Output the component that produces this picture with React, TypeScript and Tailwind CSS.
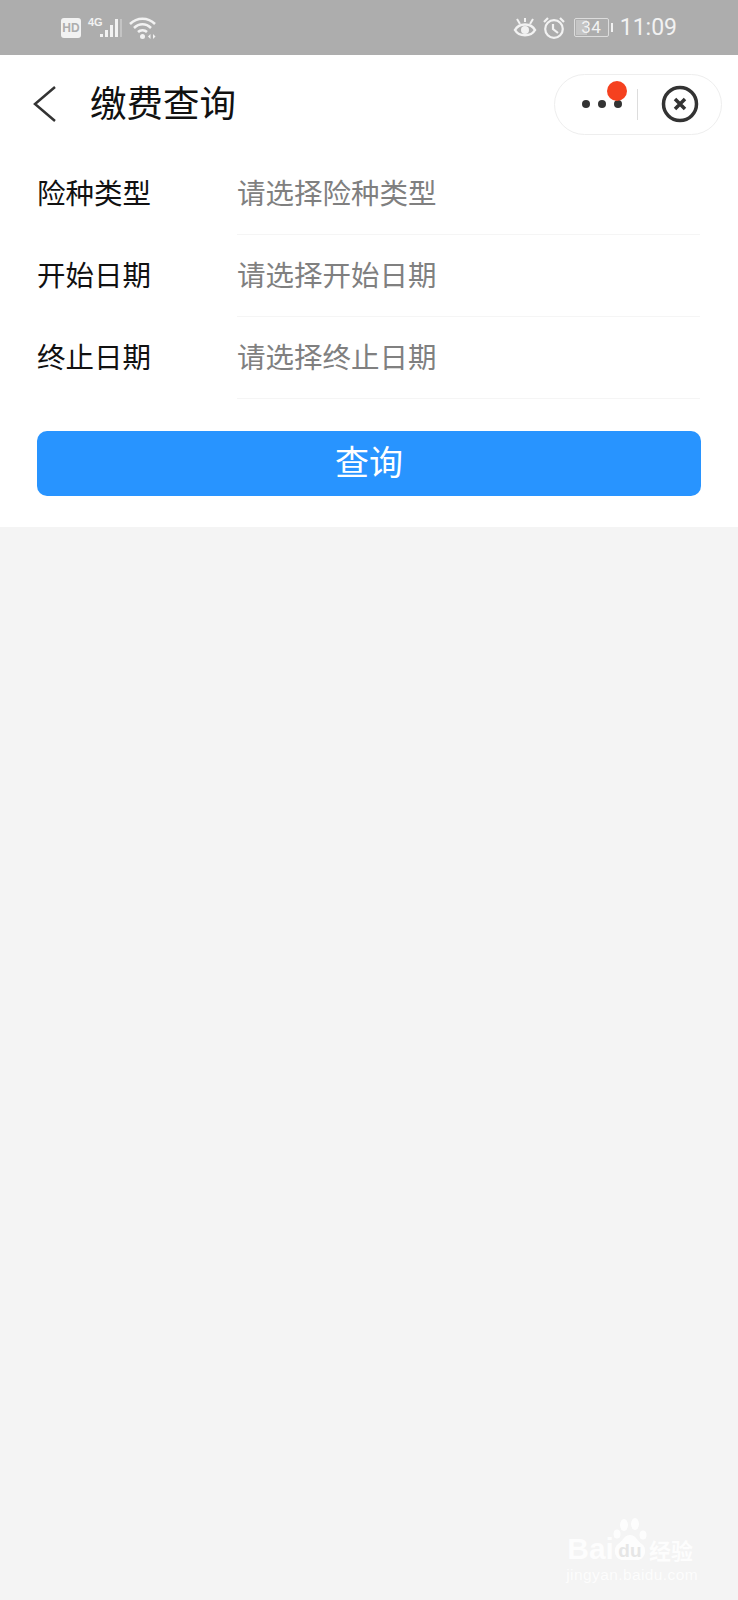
import React from "react";

const fields = [
  { label: "险种类型", placeholder: "请选择险种类型" },
  { label: "开始日期", placeholder: "请选择开始日期" },
  { label: "终止日期", placeholder: "请选择终止日期" },
];

function StatusBar() {
  return (
    <div className="flex h-[55px] items-center justify-between bg-[#adadad] pl-[61px] pr-[61px] text-[#f2f2f2]">
      <div className="flex items-center">
        <div className="flex h-[20px] w-[20px] items-center justify-center rounded-[3px] bg-[#f2f2f2] font-['Liberation_Sans',sans-serif] text-[12px] font-bold leading-none text-[#adadad]">
          HD
        </div>
        <svg width="36" height="24" viewBox="0 0 36 24" className="ml-[6px]" fill="#f2f2f2">
          <text x="1" y="10" fontSize="11" fontWeight="700" fontFamily="Liberation Sans Narrow, Liberation Sans">4G</text>
          <rect x="13" y="18" width="3" height="3" />
          <rect x="18" y="14" width="3" height="7" />
          <rect x="23" y="9" width="3" height="12" />
          <rect x="28" y="3" width="3" height="18" />
          <rect x="33" y="3" width="2" height="18" opacity="0.35" />
        </svg>
        <svg width="28" height="24" viewBox="0 0 28 24" className="ml-[6px]" fill="none" stroke="#f2f2f2" strokeWidth="2.500">
          <path d="M1 8 C8 1 19 1 26 8" />
          <path d="M5 12 C10 7 17 7 22 12" />
          <path d="M9 16 C11.500 13.500 15.500 13.500 18 16" />
          <circle cx="13.500" cy="20.500" r="2.500" fill="#f2f2f2" stroke="none" />
          <path d="M21.500 18 L19 20.500 L21.500 23 Z" fill="#f2f2f2" stroke="none" />
          <path d="M24 18 L26.500 20.500 L24 23 Z" fill="#f2f2f2" stroke="none" />
        </svg>
      </div>
      <div className="flex items-center">
        <svg width="24" height="24" viewBox="0 0 24 24" fill="none" stroke="#f2f2f2">
          <path d="M2 14 C6 6.500 18 6.500 22 14 C18 21 6 21 2 14 Z" strokeWidth="2.500" />
          <circle cx="12" cy="14" r="4" fill="#f2f2f2" stroke="none" />
          <path d="M4 3 L7 8 M20 3 L17 8 M12 2 V6" strokeWidth="2" />
        </svg>
        <svg width="24" height="24" viewBox="0 0 24 24" className="ml-[5px]" fill="none" stroke="#f2f2f2" strokeWidth="2.200">
          <circle cx="12" cy="13" r="8.800" />
          <path d="M11 8 V13 L16 17" />
          <path d="M2 6 L6 2 M22 6 L18 2" />
        </svg>
        <div className="relative ml-[8px] flex h-[19px] w-[35px] items-center justify-center rounded-[2px] border border-[#dcdcdc] text-[17px] leading-none tracking-[0.5px]">
          <div className="absolute inset-y-[1px] left-[1px] w-[11px] bg-[#c4c4c4]" />
          <span className="relative font-['Roboto',sans-serif]">34</span>
        </div>
        <div className="ml-[2px] h-[9px] w-[2px] bg-[#f2f2f2]" />
        <span className="ml-[7px] font-['Roboto',sans-serif] text-[23px] font-normal leading-none">
          11:09
        </span>
      </div>
    </div>
  );
}

function NavBar() {
  return (
    <div className="flex h-[96px] items-center justify-between pl-[33px] pr-[16px]">
      <div className="flex items-center">
        <svg width="24" height="36" viewBox="0 0 24 36" fill="none" stroke="#333333" strokeWidth="2.500" className="mt-[2px]">
          <path d="M22 1 L2 18 L22 35" />
        </svg>
        <h1 className="ml-[33px] mt-[-2px] text-[36.500px] font-normal leading-none text-[#111111]">缴费查询</h1>
      </div>
      <div className="mt-[2px] flex h-[61px] w-[168px] items-center rounded-full border border-[#eeeeee] bg-white pl-[27px]">
        <div className="relative flex items-center gap-[8px]">
          <span className="h-[8px] w-[8px] rounded-full bg-[#333333]" />
          <span className="h-[8px] w-[8px] rounded-full bg-[#333333]" />
          <span className="h-[8px] w-[8px] rounded-full bg-[#333333]" />
          <span className="absolute left-[25px] top-[-19px] h-[20px] w-[20px] rounded-full bg-[#f5411f]" />
        </div>
        <div className="ml-[15px] h-[31px] w-px bg-[#dddddd]" />
        <svg width="38" height="38" viewBox="0 0 38 38" fill="none" stroke="#333333" className="ml-[23px]">
          <circle cx="19" cy="19" r="16.500" strokeWidth="3.500" />
          <path d="M14 14 L24 24 M24 14 L14 24" strokeWidth="3.500" />
        </svg>
      </div>
    </div>
  );
}

function Watermark() {
  return (
    <div className="absolute bottom-[17px] right-[40px] flex flex-col text-white opacity-85">
      <div className="ml-[5px] flex items-end font-['Liberation_Sans',sans-serif] leading-none">
        <span className="text-[30px] font-bold leading-[24px]">Bai</span>
        <div className="relative flex h-[26px] w-[32px] items-center justify-center">
          <svg width="36" height="44" viewBox="0 0 36 44" fill="#ffffff" className="absolute bottom-0 left-[-2px]">
            <ellipse cx="5" cy="17" rx="3.500" ry="4.500" />
            <ellipse cx="12" cy="8" rx="4" ry="6" />
            <ellipse cx="23" cy="7" rx="4" ry="6" />
            <ellipse cx="31" cy="18" rx="3.500" ry="4.500" />
            <path d="M18 18 C24 18 25 24 30 27 C36 32 33 43 25 43 H11 C3 43 0 32 6 27 C11 24 12 18 18 18 Z" />
          </svg>
          <span className="relative mt-[4px] text-[19px] font-bold leading-none text-[#e4e4e4]">du</span>
        </div>
        <span className="ml-[3px] font-['Noto_Sans_CJK_SC',sans-serif] text-[22px] font-bold leading-[24px]">经验</span>
      </div>
      <span className="ml-[4px] mt-[6px] font-['Liberation_Sans',sans-serif] text-[15.500px] leading-[16px] tracking-[0.4px]">
        jingyan.baidu.com
      </span>
    </div>
  );
}

export default function App() {
  return (
    <div className="relative min-h-[1600px] bg-[#f4f4f4] font-['Noto_Sans_CJK_SC',sans-serif]">
      <StatusBar />
      <div className="bg-white">
        <NavBar />
        <div className="pt-[2px]">
          {fields.map((field) => (
            <div key={field.label} className="flex h-[82px] pl-[37px] pr-[38px]">
              <div className="w-[200px] pt-[20px] text-[28.500px] leading-[38px] text-[#111111]">{field.label}</div>
              <div className="flex-1 border-b border-[#f5f5f5] pt-[20px] text-[28.500px] leading-[38px] text-[#808080]">
                {field.placeholder}
              </div>
            </div>
          ))}
        </div>
        <div className="px-[37px] pb-[31px] pt-[32px]">
          <button className="flex h-[65px] w-full items-center justify-center rounded-[10px] bg-[#2894ff] pb-[6px] text-[34px] leading-none text-white">
            查询
          </button>
        </div>
      </div>
      <Watermark />
    </div>
  );
}
